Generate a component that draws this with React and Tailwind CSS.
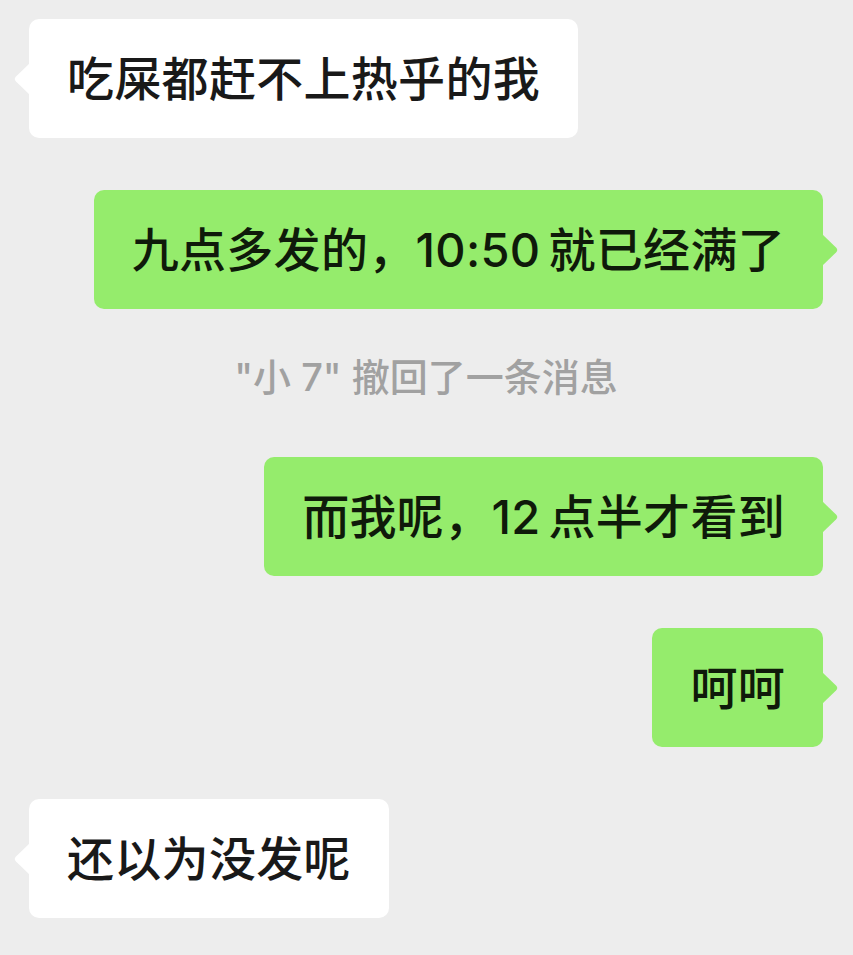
import React from "react";

const Num = ({ children }) => <span className="mr-[8px]">{children}</span>;

const messages = [
  { type: "in", content: "吃屎都赶不上热乎的我" },
  {
    type: "out",
    content: (
      <>
        九点多发的，<Num>10:50</Num>就已经满了
      </>
    ),
  },
  { type: "system", content: "\"小 7\" 撤回了一条消息" },
  {
    type: "out",
    content: (
      <>
        而我呢，<Num>12</Num>点半才看到
      </>
    ),
  },
  { type: "out", content: "呵呵" },
  { type: "in", content: "还以为没发呢" },
];

const LeftTail = () => (
  <svg
    className="absolute left-[-16px] top-1/2 -translate-y-1/2"
    width="17"
    height="32"
    viewBox="0 0 17 32"
  >
    <path d="M17 0 L3 13.5 Q0.5 16 3 18.5 L17 32 Z" fill="#ffffff" />
  </svg>
);

const RightTail = () => (
  <svg
    className="absolute right-[-16px] top-1/2 -translate-y-1/2"
    width="17"
    height="32"
    viewBox="0 0 17 32"
  >
    <path d="M0 0 L14 13.5 Q16.5 16 14 18.5 L0 32 Z" fill="#95ec6c" />
  </svg>
);

const Bubble = ({ type, content }) => {
  if (type === "system") {
    return (
      <div className="-mt-[6px] mb-[6px] flex h-[44px] items-center justify-center text-[38px] font-medium text-[#a1a1a1]">
        {content}
      </div>
    );
  }

  const isOut = type === "out";

  return (
    <div className={`flex ${isOut ? "justify-end" : "justify-start"}`}>
      <div
        className={`relative flex h-[119px] items-center rounded-[10px] px-[38px] text-[47px] font-medium leading-none tracking-[0.3px] ${
          isOut ? "bg-[#95ec6c] text-[#0f1a0a]" : "bg-white text-[#191919]"
        }`}
      >
        {isOut ? <RightTail /> : <LeftTail />}
        <span className="whitespace-nowrap">{content}</span>
      </div>
    </div>
  );
};

export default function App() {
  return (
    <div className="min-h-[955px] w-[853px] bg-[#ededed] pl-[29px] pr-[30px] pt-[19px] font-['Inter','Noto_Sans_CJK_SC',sans-serif]">
      <div className="flex flex-col gap-[52px]">
        {messages.map((m, i) => (
          <Bubble key={i} type={m.type} content={m.content} />
        ))}
      </div>
    </div>
  );
}
